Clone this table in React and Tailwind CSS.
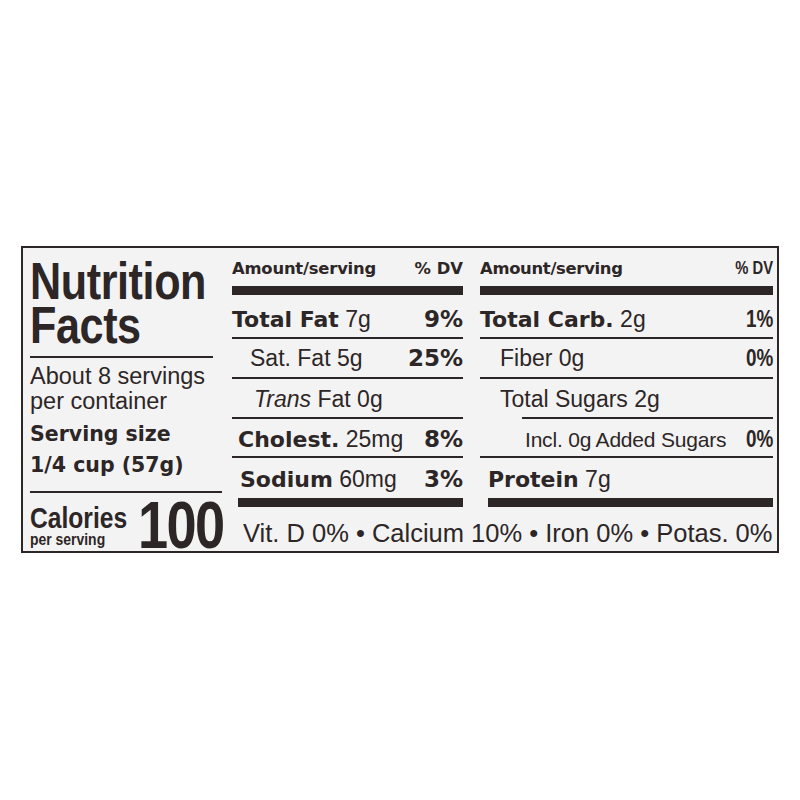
import React from "react";

// shared type styles
const reg = "font-['Liberation_Sans',Arial,sans-serif] font-normal";
const heavy = "font-['DejaVu_Sans',sans-serif] font-bold";
// no narrow face installed, so squeeze Liberation Sans Bold
const narrow = "font-['Liberation_Sans',Arial,sans-serif] font-bold inline-block scale-x-[0.82]";

function Row({ h, pb, pl = "", line = "", dv, dvCls = "", children }) {
  return (
    <div className={`flex flex-col justify-end ${h}`}>
      <div className={`flex items-baseline justify-between leading-[23px] text-[23px] ${reg} ${pb} ${pl}`}>
        <div className="whitespace-nowrap">{children}</div>
        {dv && <span className={dvCls}>{dv}</span>}
      </div>
      {line && <div className={`h-[2px] bg-[#2d2626] ${line}`} />}
    </div>
  );
}

function Label({ children }) {
  return <span className={`${heavy} text-[22px]`}>{children}</span>;
}

export default function App() {
  const midDv = `${heavy} text-[23px]`;
  const rightDv = `${narrow} origin-right text-[23px]`;

  return (
    <div className="w-[800px] h-[800px] bg-white pt-[246px] pl-[21px] text-[#2d2626]">
      <div className="w-[758px] h-[307px] border-2 border-[#2d2626] bg-[#f3f3f3] flex">
        {/* left: title, servings, calories */}
        <div className="w-[199px] pl-[7px] flex flex-col">
          <div className="pt-[11px] pb-[7px] mr-[9px] border-b-2 border-[#2d2626]">
            <div className={`${narrow} scale-x-[0.83] origin-left text-[52px] leading-[44px] tracking-[-0.5px]`}>
              Nutrition
              <br />
              Facts
            </div>
          </div>
          <div className={`${reg} text-[23.5px] leading-[25px] mt-[6px]`}>
            About 8 servings
            <br />
            per container
          </div>
          <div className={`${heavy} text-[20.5px] leading-[31px] mt-[5px] pb-[10px] border-b-2 border-[#2d2626]`}>
            Serving size
            <br />
            1/4 cup (57g)
          </div>
          <div className="flex items-end justify-between h-[60px] pb-[2px]">
            <div className="flex flex-col items-start w-[98px] mb-[1px]">
              <span className={`${narrow} origin-left w-[98px] whitespace-nowrap text-[30px] leading-[24px]`}>Calories</span>
              <span className={`${narrow} origin-left w-[76px] whitespace-nowrap text-[17px] leading-[16px] mt-[2px]`}>per serving</span>
            </div>
            <span className={`${narrow} origin-left w-[84px] shrink-0 whitespace-nowrap text-[66px] leading-[48px] tracking-[-2px]`}>100</span>
          </div>
        </div>

        {/* right area: two nutrient columns + vitamins line */}
        <div className="flex flex-col ml-[10px]">
          <div className="flex">
            {/* middle column */}
            <div className="w-[231px] flex flex-col">
              <div className="h-[38px] flex flex-col justify-end">
                <div className="flex items-baseline justify-between leading-none pb-[9px]">
                  <span className={`${heavy} text-[16.4px] tracking-[-0.2px]`}>Amount/serving</span>
                  <span className={`${heavy} text-[16.4px]`}>% DV</span>
                </div>
              </div>
              <div className="h-[9px] bg-[#2d2626]" />
              <Row h="h-[44px]" pb="pb-[6px]" line="w-full" dv="9%" dvCls={midDv}>
                <Label>Total Fat</Label> 7g
              </Row>
              <Row h="h-[40px]" pb="pb-[7px]" pl="pl-[18px]" line="w-full" dv="25%" dvCls={midDv}>
                Sat. Fat 5g
              </Row>
              <Row h="h-[40px]" pb="pb-[6px]" pl="pl-[22px]" line="w-full">
                <i>Trans</i> Fat 0g
              </Row>
              <Row h="h-[39px]" pb="pb-[5px]" pl="pl-[6px]" line="w-full" dv="8%" dvCls={midDv}>
                <Label>Cholest.</Label> 25mg
              </Row>
              <Row h="h-[40px]" pb="pb-[7px]" pl="pl-[8px]" dv="3%" dvCls={midDv}>
                <Label>Sodium</Label> 60mg
              </Row>
              <div className="h-[9px] bg-[#2d2626] ml-[6px]" />
            </div>

            {/* right column */}
            <div className="w-[293px] ml-[17px] flex flex-col">
              <div className="h-[38px] flex flex-col justify-end">
                <div className="flex items-baseline justify-between leading-none pb-[9px]">
                  <span className={`${heavy} text-[16.4px] tracking-[-0.3px]`}>Amount/serving</span>
                  <span className={`${narrow} origin-right text-[18px]`}>% DV</span>
                </div>
              </div>
              <div className="h-[9px] bg-[#2d2626]" />
              <Row h="h-[44px]" pb="pb-[6px]" line="w-full" dv="1%" dvCls={rightDv}>
                <Label>Total Carb.</Label> 2g
              </Row>
              <Row h="h-[40px]" pb="pb-[7px]" pl="pl-[20px]" line="w-full" dv="0%" dvCls={rightDv}>
                Fiber 0g
              </Row>
              <Row h="h-[40px]" pb="pb-[6px]" pl="pl-[20px]" line="ml-[42px]">
                Total Sugars 2g
              </Row>
              <Row h="h-[39px]" pb="pb-[5px]" pl="pl-[45px]" line="w-full" dv="0%" dvCls={rightDv}>
                <span className="text-[21px] tracking-[-0.2px]">Incl. 0g Added Sugars</span>
              </Row>
              <Row h="h-[40px]" pb="pb-[7px]" pl="pl-[8px]">
                <Label>Protein</Label> 7g
              </Row>
              <div className="h-[9px] bg-[#2d2626] ml-[8px]" />
            </div>
          </div>

          <div className="h-[44px] flex items-end pb-[5px] pl-[11px]">
            <span className={`${reg} text-[25.5px] leading-[26px] whitespace-nowrap`}>
              Vit. D 0% • Calcium 10% • Iron 0% • Potas. 0%
            </span>
          </div>
        </div>
      </div>
    </div>
  );
}
